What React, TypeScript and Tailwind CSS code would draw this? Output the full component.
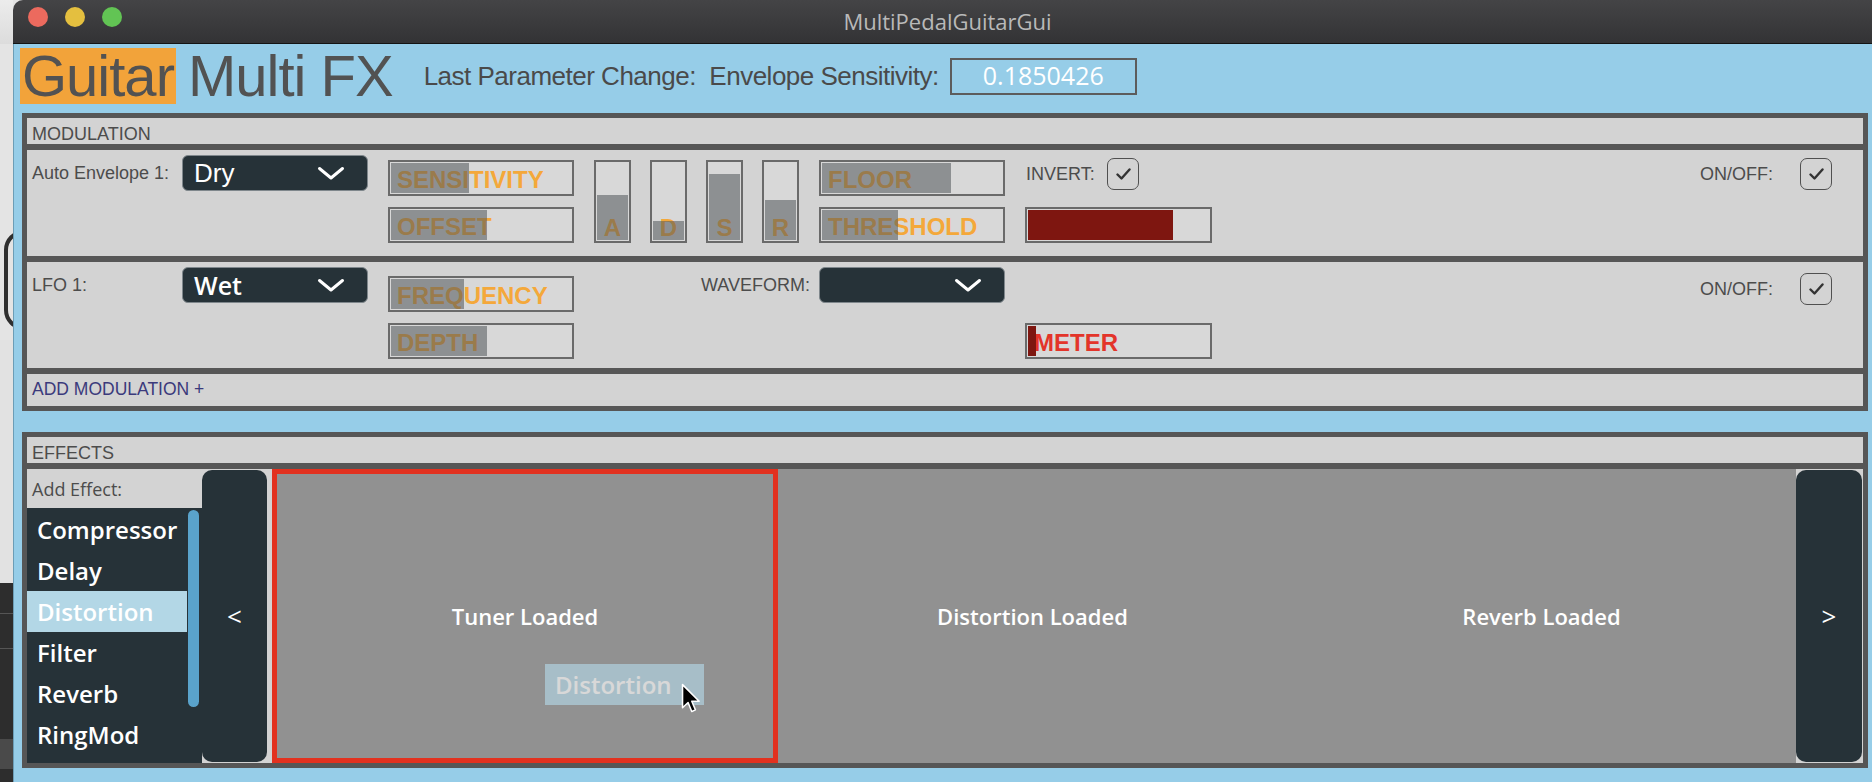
import React from 'react';

// Horizontal parameter slider: label drawn under a translucent fill
function HSlider({ label, value }: { label: string; value: number }) {
  return (
    <div className="relative h-[36px] w-[186px] border-2 border-[#6a6a6a] bg-[#d8d8d8]">
      <div className="flex h-full items-center pl-[7px] pt-[3px] text-[24px] font-bold leading-none text-[#f4a83a]">{label}</div>
      <div className="absolute bottom-px left-px top-px bg-[#50555a]/55" style={{ width: `${value * 100}%` }} />
    </div>
  );
}

function VSlider({ letter, value }: { letter: string; value: number }) {
  return (
    <div className="relative h-[83px] w-[37px] border-2 border-[#6a6a6a] bg-[#d8d8d8]">
      <div className="flex h-full items-end justify-center pb-[1px] text-[24px] font-bold leading-none text-[#f4a83a]">{letter}</div>
      <div className="absolute bottom-px left-px right-px bg-[#50555a]/55" style={{ height: `${value * 100}%` }} />
    </div>
  );
}

function Meter({ value, label }: { value: number; label: string }) {
  return (
    <div className="relative h-[36px] w-[187px] border-2 border-[#6a6a6a] bg-[#d8d8d8]">
      <div className="flex h-full items-center pl-[7px] pt-[3px] text-[24px] font-bold leading-none text-[#e3342a]">{label}</div>
      <div className="absolute bottom-px left-px top-px bg-[#7e1610]" style={{ width: `${value * 100}%` }} />
    </div>
  );
}

function Check() {
  return (
    <div className="flex h-[32px] w-[32px] items-center justify-center rounded-[7px] border-[1.5px] border-[#505050]">
      <svg width="15" height="12" viewBox="0 0 15 12">
        <path d="M1.5 6.5l4 4L13.5 1.5" fill="none" stroke="#333" strokeWidth="2.4" strokeLinecap="round" strokeLinejoin="round" />
      </svg>
    </div>
  );
}

function Dropdown({ text, textClass = '' }: { text?: string; textClass?: string }) {
  return (
    <div className="flex h-[36px] w-[186px] items-center justify-between rounded-[6px] border border-[#7f878c] bg-[#263238] pl-[11px] pr-[22px]">
      <span className={`leading-none text-white ${textClass}`}>{text}</span>
      <svg width="28" height="14" viewBox="0 0 28 14">
        <path d="M2.5 2.5l11.5 9.5L25.5 2.5" fill="none" stroke="white" strokeWidth="3" strokeLinecap="round" strokeLinejoin="round" />
      </svg>
    </div>
  );
}

function Label({ children, className = '' }: { children: React.ReactNode; className?: string }) {
  return <span className={`text-[18px] leading-none text-[#4c4c4c] ${className}`}>{children}</span>;
}

function NavButton({ glyph, className = '' }: { glyph: string; className?: string }) {
  return (
    <div className={`my-px flex items-center justify-center rounded-[10px] bg-[#263238] font-['Open_Sans',sans-serif] text-[26px] text-white ${className}`}>
      {glyph}
    </div>
  );
}

const effects = ['Compressor', 'Delay', 'Distortion', 'Filter', 'Reverb', 'RingMod'];

function Cursor() {
  return (
    <svg width="20" height="31" viewBox="0 0 13 20">
      <path d="M1 1 L1 16 L4.6 12.6 L7 18.4 L9.4 17.4 L7 11.8 L11.8 11.8 Z" fill="black" stroke="white" strokeWidth="1" strokeLinejoin="round" />
    </svg>
  );
}

export default function App() {
  return (
    <div className="flex h-[782px] w-[1872px] overflow-hidden bg-[#e3e3e3] font-['Liberation_Sans',Arial,sans-serif]">
      {/* desktop behind the window */}
      <div className="flex w-[13px] flex-col overflow-hidden">
        <div className="h-[44px] bg-gradient-to-b from-[#ececec] to-[#dcdcdc]" />
        <div className="h-[186px] bg-[#e4e4e4]" />
        <div className="h-[110px] bg-[#e4e4e4] pl-[4px]">
          <div className="h-[100px] w-[40px] rounded-full border-[4px] border-[#2e2e2e]" />
        </div>
        <div className="h-[243px] bg-[#e2e2e2]" />
        <div className="flex-1 bg-[#2d2d2d]">
          <div className="mt-[30px] h-[36px] border-y border-[#555]" />
          <div className="mt-[90px] h-[30px] bg-[#4a4a4a]" />
        </div>
      </div>

      <div className="flex flex-1 flex-col">
        {/* title bar */}
        <div className="grid h-[44px] grid-cols-[1fr_auto_1fr] items-start rounded-tl-[10px] border-b border-[#141414] bg-gradient-to-b from-[#444446] to-[#333335]">
          <div className="flex gap-[17px] pl-[15px] pt-[7px]">
            <div className="h-[20px] w-[20px] rounded-full bg-[#ec6a5e]" />
            <div className="h-[20px] w-[20px] rounded-full bg-[#e4bf3f]" />
            <div className="h-[20px] w-[20px] rounded-full bg-[#62c454]" />
          </div>
          <div className="pl-[10px] pt-[5px] font-['Open_Sans',sans-serif] text-[22px] text-[#b9b9b9]">MultiPedalGuitarGui</div>
          <div />
        </div>

        <div className="flex flex-1 flex-col border-l border-[#6c9db6] bg-[#96cde8] pl-[8px] pr-[4px]">
          {/* header */}
          <div className="h-[69px] pt-[4px]">
            <div className="flex h-[56px] items-center">
              <span className="-ml-[2px] bg-[#f2a33a] px-[2px] text-[58px] leading-[56px] tracking-[-1px] text-[#525252]">Guitar</span>
              <span className="ml-[12px] text-[58px] leading-[56px] tracking-[-1px] text-[#525252]">Multi FX</span>
              <span className="ml-[31px] whitespace-pre text-[26px] tracking-[-0.5px] text-[#4a4a4a]">Last Parameter Change:  Envelope Sensitivity:</span>
              <div className="ml-[11px] flex h-[37px] w-[187px] items-center justify-center border-2 border-[#5c5c5c] font-['Open_Sans',sans-serif] text-[25px] text-white">
                0.1850426
              </div>
            </div>
          </div>

          {/* modulation */}
          <div className="flex h-[298px] flex-col gap-[6px] bg-[#565656] p-[5px]">
            <div className="flex h-[26px] items-center bg-[#d3d3d3] pl-[5px] pt-[5px]">
              <Label>MODULATION</Label>
            </div>

            <div className="flex h-[106px] items-start bg-[#d3d3d3] pl-[5px]">
              <div className="mt-[5px] flex items-center">
                <Label className="w-[150px]">Auto Envelope 1:</Label>
                <Dropdown text="Dry" textClass="text-[26px]" />
              </div>
              <div className="ml-[20px] mt-[10px] flex flex-col gap-[11px]">
                <HSlider label="SENSITIVITY" value={0.43} />
                <HSlider label="OFFSET" value={0.53} />
              </div>
              <div className="ml-[20px] mt-[10px] flex gap-[19px]">
                <VSlider letter="A" value={0.57} />
                <VSlider letter="D" value={0.24} />
                <VSlider letter="S" value={0.83} />
                <VSlider letter="R" value={0.51} />
              </div>
              <div className="ml-[20px] mt-[10px] flex flex-col gap-[11px]">
                <HSlider label="FLOOR" value={0.71} />
                <HSlider label="THRESHOLD" value={0.42} />
              </div>
              <div className="ml-[20px] mt-[8px] flex flex-col">
                <div className="flex h-[32px] items-center">
                  <Label className="w-[82px] pl-px">INVERT:</Label>
                  <Check />
                </div>
                <div className="mt-[17px]">
                  <Meter value={0.79} label="METER" />
                </div>
              </div>
              <div className="ml-auto mr-[31px] mt-[8px] flex items-center">
                <Label className="w-[100px]">ON/OFF:</Label>
                <Check />
              </div>
            </div>

            <div className="flex h-[106px] items-start bg-[#d3d3d3] pl-[5px]">
              <div className="mt-[5px] flex items-center">
                <Label className="w-[150px]">LFO 1:</Label>
                <Dropdown text="Wet" textClass="font-['Open_Sans',sans-serif] text-[25px] font-semibold" />
              </div>
              <div className="ml-[20px] mt-[14px] flex flex-col gap-[11px]">
                <HSlider label="FREQUENCY" value={0.4} />
                <HSlider label="DEPTH" value={0.53} />
              </div>
              <div className="mt-[5px] flex h-[36px] w-[245px] items-center justify-end pr-[9px]">
                <Label>WAVEFORM:</Label>
              </div>
              <div className="mt-[5px]">
                <Dropdown />
              </div>
              <div className="ml-[20px] mt-[61px]">
                <Meter value={0.045} label="METER" />
              </div>
              <div className="ml-auto mr-[31px] mt-[11px] flex items-center">
                <Label className="w-[100px]">ON/OFF:</Label>
                <Check />
              </div>
            </div>

            <div className="flex h-[32px] items-center bg-[#d3d3d3] pl-[5px]">
              <span className="text-[17.5px] leading-none text-[#3b3a7c]">ADD MODULATION +</span>
            </div>
          </div>

          {/* effects */}
          <div className="mt-[21px] flex h-[336px] flex-col gap-[6px] bg-[#565656] p-[5px]">
            <div className="flex h-[26px] items-center bg-[#d3d3d3] pl-[5px] pt-[5px]">
              <Label>EFFECTS</Label>
            </div>
            <div className="flex h-[294px] bg-[#d3d3d3] pr-px">
              <div className="flex w-[175px] flex-col">
                <div className="flex h-[39px] items-center pl-[5px] pt-[2px] font-['Open_Sans',sans-serif] text-[18px] text-[#4c4c4c]">Add Effect:</div>
                <div className="flex flex-1 bg-[#263238]">
                  <div className="w-[160px] pt-px">
                    {effects.map((e) => (
                      <div
                        key={e}
                        className={`flex h-[41px] items-center pl-[10px] font-['Open_Sans',sans-serif] text-[24px] font-semibold text-white ${e === 'Distortion' ? 'bg-[#b3d7e6]' : ''}`}
                      >
                        {e}
                      </div>
                    ))}
                  </div>
                  <div className="pl-px pt-[2px]">
                    <div className="h-[197px] w-[11px] rounded-full bg-[#5aa3cb]" />
                  </div>
                </div>
              </div>
              <NavButton glyph="<" className="w-[65px]" />
              <div className="ml-[5px] flex flex-1 bg-[#919191] font-['Open_Sans',sans-serif] text-[22px] font-semibold text-white">
                <div className="relative flex w-[506px] items-center justify-center border-[5px] border-[#e2311f]">
                  Tuner Loaded
                  <div className="absolute left-[268px] top-[190px] flex h-[41px] w-[159px] items-center bg-[#b3d7e6] pl-[10px] text-[24px] opacity-65">
                    Distortion
                  </div>
                  <div className="absolute left-[404px] top-[209px]">
                    <Cursor />
                  </div>
                </div>
                <div className="flex flex-1 items-center justify-center">Distortion Loaded</div>
                <div className="flex flex-1 items-center justify-center">Reverb Loaded</div>
              </div>
              <NavButton glyph=">" className="w-[66px]" />
            </div>
          </div>
        </div>
      </div>
    </div>
  );
}
